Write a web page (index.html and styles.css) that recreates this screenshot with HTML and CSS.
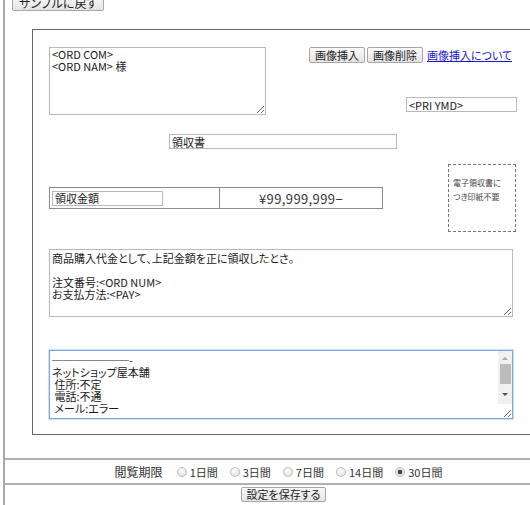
FILE: index.html
```html
<!DOCTYPE html>
<html lang="ja">
<head>
<meta charset="utf-8">
<title>領収書設定</title>
<link rel="stylesheet" href="styles.css">
</head>
<body>
<div class="page">
  <div class="top">
    <button class="btn back">サンプルに戻す</button>
  </div>
  <div class="main-row">
    <div class="sheet">
      <div class="sheet-top">
        <textarea class="field addr">&lt;ORD COM&gt;
&lt;ORD NAM&gt; 様</textarea>
        <div class="right-col">
          <div class="tools">
            <button class="btn">画像挿入</button>
            <button class="btn">画像削除</button>
            <a class="link" href="#">画像挿入について</a>
          </div>
          <input class="field date" type="text" value="<PRI YMD>">
        </div>
      </div>
      <div class="title-row">
        <input class="field title" type="text" value="領収書">
      </div>
      <div class="amount-row">
        <div class="amount">
          <div class="cell label-cell"><input class="field amount-label" type="text" value="領収金額"></div>
          <div class="cell value-cell">¥99,999,999−</div>
        </div>
        <div class="stamp">電子領収書に<br>つき印紙不要</div>
      </div>
      <textarea class="field note">商品購入代金として、上記金額を正に領収したとさ。

注文番号:&lt;ORD NUM&gt;
お支払方法:&lt;PAY&gt;</textarea>
      <div class="shop-wrap">
        <textarea class="field shop">───────-
ネットショップ屋本舗
 住所:不定
 電話:不通
 メール:エラー
</textarea>
        <div class="vscroll" aria-hidden="true">
          <span class="arrow-up"></span>
          <span class="thumb"></span>
          <span class="arrow-down"></span>
        </div>
      </div>
    </div>
  </div>
  <div class="period-row">
    <span class="period-title">閲覧期限</span>
    <label class="opt"><input class="radio" type="radio" name="p">1日間</label>
    <label class="opt"><input class="radio" type="radio" name="p">3日間</label>
    <label class="opt"><input class="radio" type="radio" name="p">7日間</label>
    <label class="opt"><input class="radio" type="radio" name="p">14日間</label>
    <label class="opt"><input class="radio" type="radio" name="p" checked>30日間</label>
  </div>
  <div class="save-row">
    <button class="btn save">設定を保存する</button>
  </div>
</div>
</body>
</html>
```
FILE: styles.css
```css
html, body {
  margin: 0;
  padding: 0;
  background: #fff;
  overflow: hidden;
}
body {
  font-family: "Noto Sans CJK JP", "Liberation Sans", sans-serif;
  font-size: 12px;
  color: #222;
  font-feature-settings: "palt";
}
.page {
  width: 556px;
  margin: -6px 0 0 3px;
  border-left: 2px solid #a9a9a9;
}
.top {
  padding-left: 7px;
  height: 17px;
}
.btn {
  font-family: inherit;
  font-feature-settings: "palt";
  font-size: 11px;
  line-height: 13px;
  height: 16px;
  padding: 0 5px;
  color: #222;
  border: 1px solid #a6a6a6;
  border-radius: 2px;
  background: linear-gradient(#fafafa, #e4e4e4);
  margin: 0;
  white-space: nowrap;
  cursor: pointer;
}
.back {
  height: 17px;
  font-size: 12px;
  padding: 0 6px;
}
.main-row {
  padding: 18px 0 23px 27px;
}
.sheet {
  width: 468px;
  border: 1px solid #666;
  border-right: 0;
  padding: 17px 30px 15px 16px;
}
.field {
  box-sizing: border-box;
  font-family: inherit;
  font-feature-settings: "palt";
  font-size: 11px;
  line-height: 12px;
  color: #1a1a1a;
  border: 1px solid #b9b9b9;
  background: #fff;
  margin: 0;
  padding: 1px 2px;
  outline: none;
}
textarea.field {
  display: block;
  padding: 2px 2px;
}
.sheet-top {
  display: flex;
}
.addr {
  width: 217px;
  height: 68px;
  resize: both;
}
textarea.addr {
  padding-top: 0;
}
.right-col {
  flex: 1;
  display: flex;
  flex-direction: column;
  align-items: flex-end;
}
.tools {
  display: flex;
  align-items: center;
  gap: 2px;
  margin-right: 5px;
  height: 16px;
}
.link {
  color: #1a1ad0;
  font-size: 11px;
  text-decoration: underline;
  margin-left: 2px;
}
.date {
  margin-top: 34px;
  width: 111px;
  height: 15px;
}
.title-row {
  margin-top: 19px;
  padding-left: 120px;
}
.title {
  width: 228px;
  height: 15px;
  display: block;
}
.amount-row {
  margin-top: 15px;
  display: flex;
  align-items: center;
  justify-content: space-between;
}
.amount {
  width: 334px;
  height: 22px;
  box-sizing: border-box;
  border: 1px solid #8a8a8a;
  display: flex;
}
.cell {
  display: flex;
  align-items: center;
}
.label-cell {
  width: 167px;
  border-right: 1px solid #8a8a8a;
  padding-left: 2px;
}
.amount-label {
  width: 111px;
  height: 15px;
}
.value-cell {
  flex: 1;
  justify-content: center;
  font-size: 13px;
  letter-spacing: 0.4px;
  color: #333;
}
.stamp {
  box-sizing: border-box;
  width: 68px;
  height: 68px;
  margin-right: 1px;
  border: 1px dashed #777;
  font-size: 8px;
  line-height: 14px;
  color: #444;
  padding: 11px 0 0 4px;
}
.note {
  margin-top: 17px;
  width: 464px;
  height: 68px;
}
.shop-wrap {
  position: relative;
  margin-top: 33px;
  width: 464px;
}
textarea.shop {
  width: 464px;
  height: 69px;
  padding: 3px 16px 2px 2px;
  border-color: #7ea6e0;
  box-shadow: 0 0 0 1px #cfdff6;
  overflow: hidden;
}
.vscroll {
  position: absolute;
  top: 1px;
  right: 1px;
  width: 14px;
  height: 53px;
  background: #f0f0f0;
}
.arrow-up {
  position: absolute;
  top: 6px;
  left: 4px;
  border-left: 3px solid transparent;
  border-right: 3px solid transparent;
  border-bottom: 3px solid #a8a8a8;
}
.thumb {
  position: absolute;
  top: 13px;
  left: 2px;
  width: 11px;
  height: 20px;
  background: #bcbcbc;
}
.arrow-down {
  position: absolute;
  top: 42px;
  left: 4px;
  border-left: 3px solid transparent;
  border-right: 3px solid transparent;
  border-top: 3px solid #505050;
}
.period-row {
  border-top: 2px solid #b0b0b0;
  height: 23px;
  display: flex;
  align-items: center;
  justify-content: center;
  gap: 12px;
  font-size: 11px;
  color: #333;
  padding-right: 9px;
}
.period-title {
  font-size: 12px;
  margin-right: 2px;
}
.opt {
  display: flex;
  align-items: center;
}
.radio {
  appearance: none;
  -webkit-appearance: none;
  width: 10px;
  height: 10px;
  margin: 0 3px 0 0;
  border-radius: 50%;
  border: 1px solid #bdbdbd;
  background: radial-gradient(circle at 40% 35%, #fdfdfd, #dcdcdc);
}
.radio:checked {
  background: radial-gradient(circle, #444 0 2px, #e8e8e8 2.6px);
}
.save-row {
  border-top: 2px solid #b0b0b0;
  display: flex;
  justify-content: center;
  padding-top: 2px;
  height: 30px;
}
.save {
  height: 15px;
  width: 85px;
  font-size: 11px;
}
```
